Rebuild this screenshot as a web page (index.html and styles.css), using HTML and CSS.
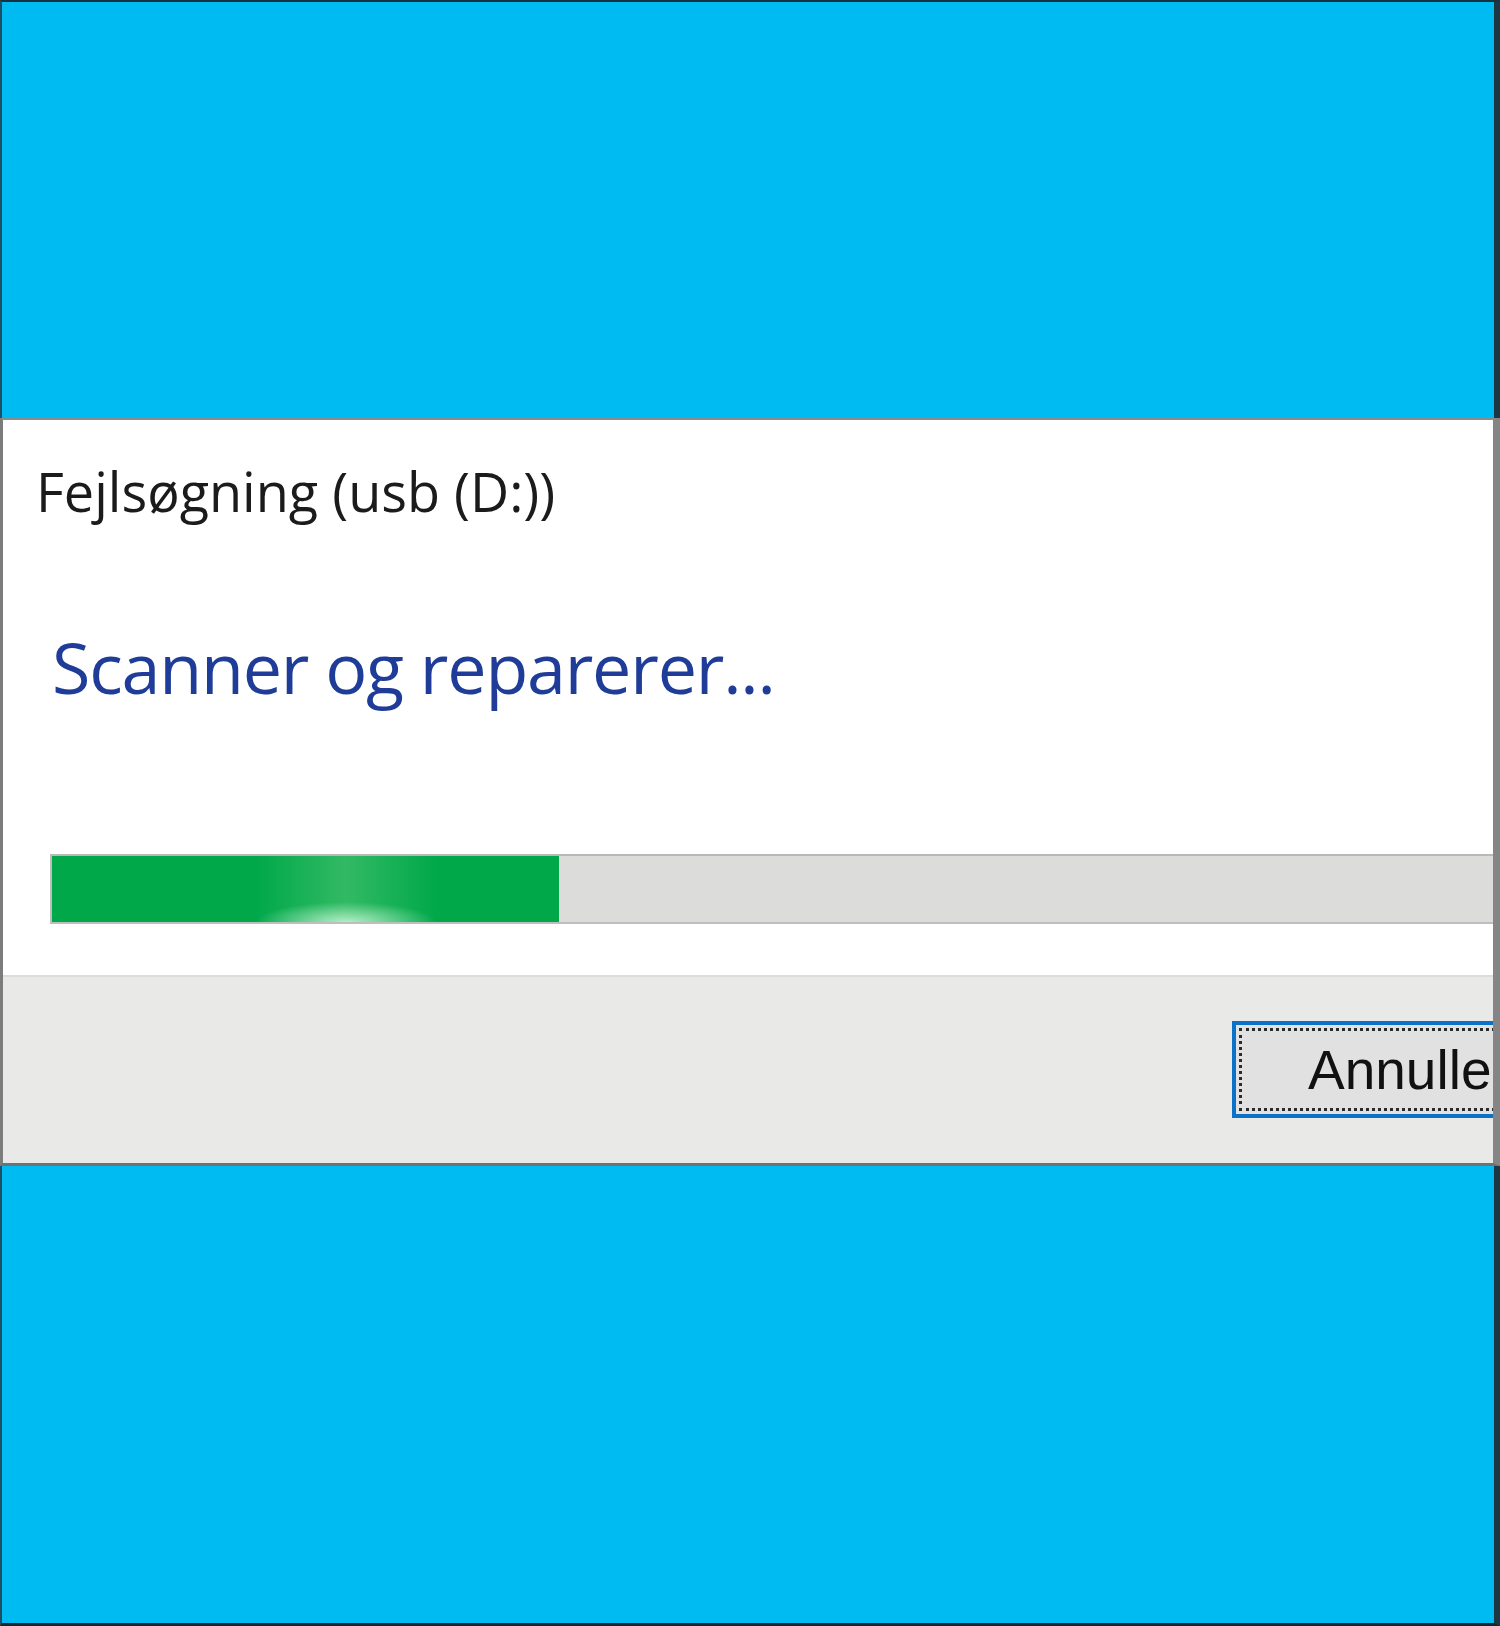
FILE: index.html
```html
<!DOCTYPE html>
<html lang="da">
<head>
<meta charset="utf-8">
<title>Fejlsøgning (usb (D:))</title>
<link rel="stylesheet" href="styles.css">
</head>
<body>
<div class="screen">
  <div class="sky sky-top"></div>
  <div class="dialog">
    <div class="dialog-body">
      <div class="title">Fejlsøgning (usb (D:))</div>
      <div class="instruction">Scanner og reparerer...</div>
      <div class="progress">
        <div class="progress-fill" style="width: 507px"></div>
      </div>
    </div>
    <div class="footer">
      <button class="btn" type="button"><span class="btn-focus">Annuller</span></button>
    </div>
  </div>
  <div class="sky sky-bottom"></div>
</div>
</body>
</html>
```

FILE: styles.css
```css
* { box-sizing: border-box; }
html, body { margin: 0; padding: 0; }
body { width: 1500px; height: 1626px; overflow: hidden; background: #00bbf2; }

.screen {
  width: 1500px;
  height: 1626px;
  display: flex;
  flex-direction: column;
  overflow: hidden;
}

.sky { background: #00bbf2; }
.sky-top {
  height: 418px;
  border-top: 2px solid #16323c;
  border-left: 2px solid #1f4f63;
  border-right: 6px solid #1c3742;
}
.sky-bottom {
  flex: 1;
  border-left: 2px solid #1f4f63;
  border-right: 6px solid #1c3742;
  border-bottom: 3px solid #14262d;
}

.dialog {
  border-top: 2px solid #8a8c8c;
  border-left: 3px solid #7c7c7c;
  border-right: 7px solid #858585;
  border-bottom: 3px solid #6f7274;
  overflow: hidden;
  display: flex;
  flex-direction: column;
}

.dialog-body {
  height: 555px;
  background: #ffffff;
  padding-top: 41px;
  padding-left: 33px;
}

.title {
  font-family: "Open Sans", "Noto Sans", sans-serif;
  font-size: 54px;
  line-height: 60px;
  color: #1b1b1b;
  white-space: nowrap;
}

.instruction {
  margin-top: 106px;
  margin-left: 16px;
  font-family: "Open Sans", "Noto Sans", sans-serif;
  font-size: 70px;
  line-height: 80px;
  letter-spacing: -1.2px;
  color: #1f3d98;
  white-space: nowrap;
}

.progress {
  margin-top: 147px;
  margin-left: 14px;
  margin-right: -40px;
  height: 70px;
  background: #dcdddb;
  border: 2px solid #bdbebd;
  border-top-color: #b8b9b8;
  display: flex;
}

.progress-fill {
  height: 100%;
  background:
    radial-gradient(ellipse 90px 20px at 58% 100%, rgba(220, 255, 230, 0.75), rgba(220, 255, 230, 0) 100%),
    linear-gradient(90deg, rgba(90, 200, 120, 0) 40%, rgba(90, 200, 120, 0.55) 58%, rgba(90, 200, 120, 0) 76%),
    #00a84a;
}

.footer {
  height: 188px;
  background: #e9e9e7;
  border-top: 2px solid #dcdcda;
  display: flex;
  justify-content: flex-start;
  padding-top: 44px;
  padding-left: 1229px;
}

.btn {
  flex: none;
  width: 300px;
  height: 97px;
  padding: 3px;
  margin: 0;
  background: #e1e1e1;
  border: 4px solid #0b72c8;
  display: flex;
  cursor: default;
}

.btn-focus {
  flex: 1;
  display: flex;
  align-items: center;
  padding-left: 66px;
  border: 3px dotted #2b2b2b;
  border-right: none;
  font-family: "Liberation Sans", Arial, sans-serif;
  font-size: 55px;
  color: #111111;
  white-space: nowrap;
}
```
